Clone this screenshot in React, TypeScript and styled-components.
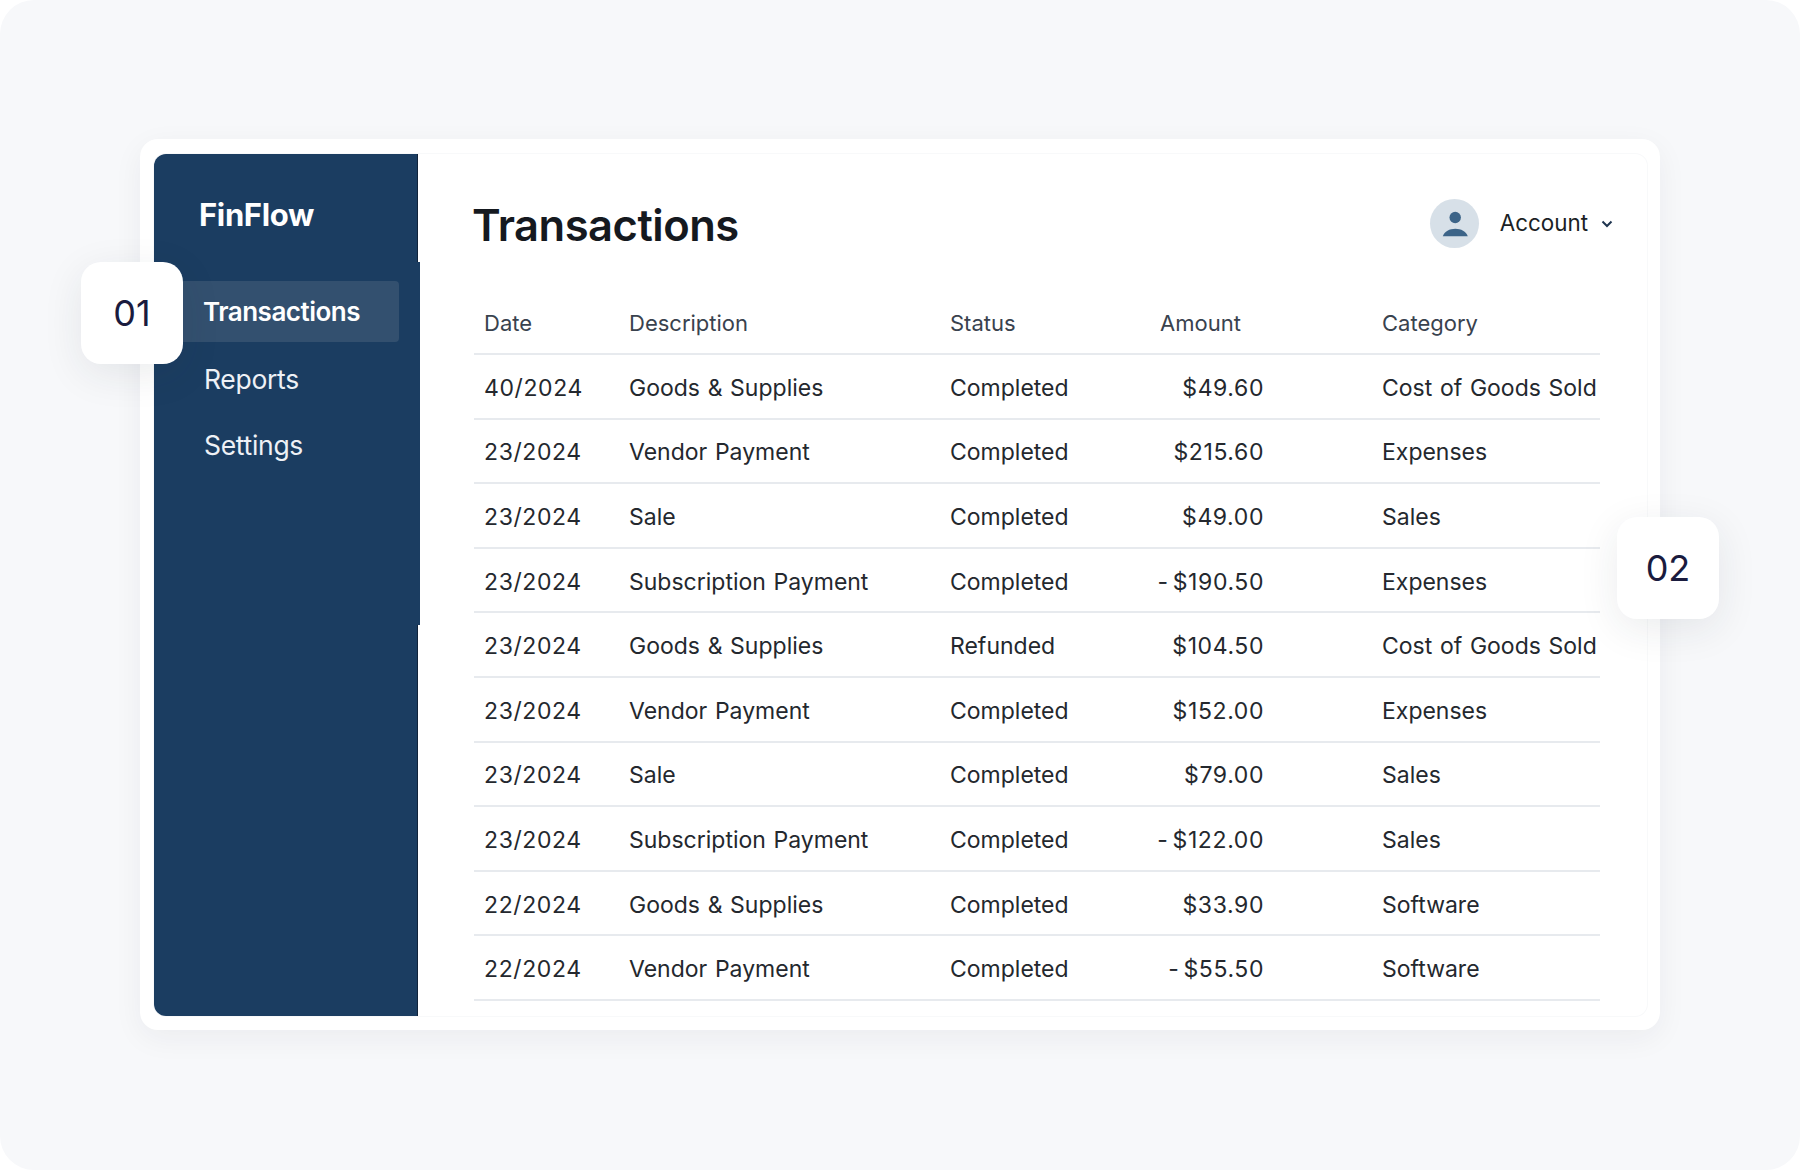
import React from "react";
import styled, { createGlobalStyle } from "styled-components";

const Global = createGlobalStyle`
  html, body { margin: 0; padding: 0; background: #fff; }
  body { font-family: Inter, "Liberation Sans", sans-serif; -webkit-font-smoothing: antialiased; }
`;

const Stage = styled.div`
  width: 1800px;
  height: 1170px;
  box-sizing: border-box;
  padding: 139px 140px 140px;
  background: #f7f8fa;
  border-radius: 34px;
  position: relative;
  overflow: hidden;
`;

const Card = styled.div`
  height: 100%;
  box-sizing: border-box;
  padding: 15px 13px 14px 14px;
  background: #fff;
  border-radius: 18px;
  box-shadow: 0 8px 30px rgba(30, 40, 60, 0.055);
`;

const Inner = styled.div`
  height: 100%;
  display: flex;
  border-radius: 12px;
  box-shadow: 0 0 0 1px #f8f9fa;
`;

const Sidebar = styled.aside`
  width: 264px;
  flex: none;
  box-sizing: border-box;
  padding: 42px 18px 0 45px;
  background: #1b3d61;
  border-right: 1px solid #11233a;
  border-radius: 12px 0 0 12px;
  position: relative;
`;

const SideTab = styled.div`
  position: absolute;
  right: -3px;
  top: 108px;
  width: 3px;
  height: 363px;
  background: #1b3d61;
`;

const Logo = styled.div`
  color: #fff;
  font-size: 31px;
  font-weight: 700;
  line-height: 38px;
  letter-spacing: -0.35px;
`;

const Nav = styled.nav`
  margin-top: 47px;
  margin-left: -25px;
  display: flex;
  flex-direction: column;
`;

const NavItem = styled.a<{ $active?: boolean }>`
  display: block;
  height: 61px;
  margin-bottom: ${(p) => (p.$active ? "7px" : "5px")};
  padding-left: ${(p) => (p.$active ? "29px" : "30px")};
  line-height: 61px;
  font-size: ${(p) => (p.$active ? "26px" : "26.5px")};
  color: ${(p) => (p.$active ? "#fff" : "#eef1f6")};
  font-weight: ${(p) => (p.$active ? 600 : 400)};
  letter-spacing: ${(p) => (p.$active ? "-0.5px" : "-0.3px")};
  background: ${(p) => (p.$active ? "#33506f" : "transparent")};
  border-radius: 4px;
`;

const Main = styled.main`
  flex: 1;
  min-width: 0;
  box-sizing: border-box;
  padding: 0 47px 0 56px;
  display: flex;
  flex-direction: column;
`;

const Header = styled.header`
  height: 138px;
  flex: none;
  display: flex;
  justify-content: space-between;
  align-items: flex-start;
`;

const Title = styled.h1`
  margin: 44px 0 0 -2px;
  font-size: 43.5px;
  line-height: 54px;
  font-weight: 600;
  color: #15191f;
  letter-spacing: -0.5px;
`;

const Account = styled.div`
  margin: 45px -14px 0 0;
  display: flex;
  align-items: center;
`;

const Avatar = styled.div`
  width: 49px;
  height: 49px;
  border-radius: 50%;
  background: #d7e0e8;
  display: flex;
  align-items: center;
  justify-content: center;
`;

const AccountName = styled.span`
  margin-left: 21px;
  margin-top: -2px;
  font-size: 22.4px;
  color: #1b1f25;
`;

const Chevron = styled.svg`
  margin-left: 12px;
  width: 14px;
  height: 10px;
`;

const Row = styled.div<{ $head?: boolean }>`
  display: grid;
  grid-template-columns: 155px 321px 210px 222px 1fr;
  box-sizing: border-box;
  height: ${(p) => (p.$head ? "63px" : "64.6px")};
  padding-top: ${(p) => (p.$head ? "0" : "3px")};
  align-items: center;
  border-bottom: 2px solid #e7eaee;
  font-size: ${(p) => (p.$head ? "22px" : "23px")};
  color: ${(p) => (p.$head ? "#39424e" : "#24282e")};
  word-spacing: ${(p) => (p.$head ? "0" : "1.2px")};
  white-space: nowrap;
`;

const DateCell = styled.div<{ $numeric?: boolean }>`
  padding-left: 10px;
  letter-spacing: ${(p) => (p.$numeric ? "0.6px" : "0")};
`;

const AmountCell = styled.div`
  margin-left: -40px;
  padding-right: 118px;
  text-align: right;
  letter-spacing: 0.6px;
  word-spacing: -3px;
`;

const rows = [
  ["40/2024", "Goods & Supplies", "Completed", "$49.60", "Cost of Goods Sold"],
  ["23/2024", "Vendor Payment", "Completed", "$215.60", "Expenses"],
  ["23/2024", "Sale", "Completed", "$49.00", "Sales"],
  ["23/2024", "Subscription Payment", "Completed", "- $190.50", "Expenses"],
  ["23/2024", "Goods & Supplies", "Refunded", "$104.50", "Cost of Goods Sold"],
  ["23/2024", "Vendor Payment", "Completed", "$152.00", "Expenses"],
  ["23/2024", "Sale", "Completed", "$79.00", "Sales"],
  ["23/2024", "Subscription Payment", "Completed", "- $122.00", "Sales"],
  ["22/2024", "Goods & Supplies", "Completed", "$33.90", "Software"],
  ["22/2024", "Vendor Payment", "Completed", "- $55.50", "Software"],
];

const Badge = styled.div<{ $x: number; $y: number }>`
  position: absolute;
  left: ${(p) => p.$x}px;
  top: ${(p) => p.$y}px;
  width: 102px;
  height: 102px;
  border-radius: 20px;
  background: #fff;
  box-shadow: 0 10px 40px rgba(30, 40, 60, 0.09);
  display: flex;
  align-items: center;
  justify-content: center;
  font-size: 36px;
  color: #1a1b3e;
`;

export default function App() {
  return (
    <Stage>
      <Global />
      <Card>
        <Inner>
          <Sidebar>
            <SideTab />
            <Logo>FinFlow</Logo>
            <Nav>
              <NavItem $active>Transactions</NavItem>
              <NavItem>Reports</NavItem>
              <NavItem>Settings</NavItem>
            </Nav>
          </Sidebar>
          <Main>
            <Header>
              <Title>Transactions</Title>
              <Account>
                <Avatar>
                  <svg width="28" height="28" viewBox="0 0 28 28">
                    <circle cx="15.2" cy="7.500" r="5.7" fill="#3c6488" />
                    <path d="M2.800 26.200C4.500 21.500 9.500 18.800 15.300 18.800S26 21.500 27.800 26.200z" fill="#3c6488" />
                  </svg>
                </Avatar>
                <AccountName>Account</AccountName>
                <Chevron viewBox="0 0 14 10">
                  <path d="M2.500 2.500 7 7l4.500-4.500" fill="none" stroke="#1f3550" strokeWidth="2" />
                </Chevron>
              </Account>
            </Header>
            <Row $head>
              <DateCell>Date</DateCell>
              <div>Description</div>
              <div>Status</div>
              <div>Amount</div>
              <div>Category</div>
            </Row>
            {rows.map((r, i) => (
              <Row key={i}>
                <DateCell $numeric>{r[0]}</DateCell>
                <div>{r[1]}</div>
                <div>{r[2]}</div>
                <AmountCell>{r[3]}</AmountCell>
                <div>{r[4]}</div>
              </Row>
            ))}
          </Main>
        </Inner>
      </Card>
      <Badge $x={81} $y={262}>01</Badge>
      <Badge $x={1617} $y={517}>02</Badge>
    </Stage>
  );
}
